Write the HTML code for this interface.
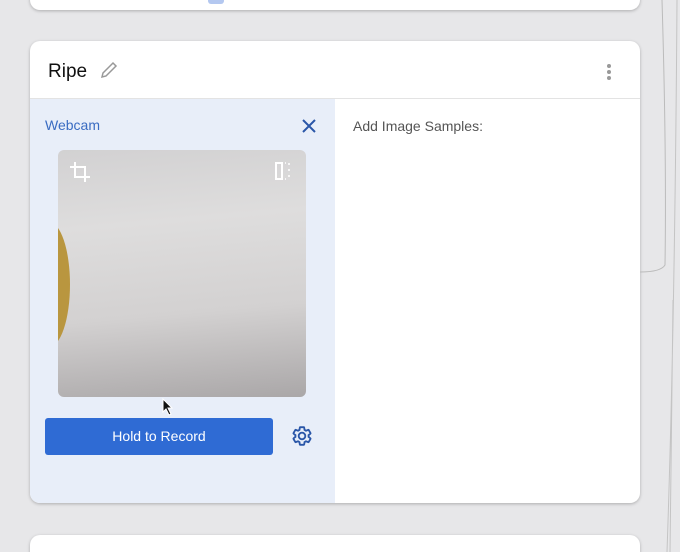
<!DOCTYPE html>
<html><head><style>
html,body{margin:0;width:680px;height:552px;overflow:hidden}
body{background:#e7e7e9;position:relative;font-family:"Liberation Sans",Arial,sans-serif}
.card{position:absolute;background:#fff;border-radius:10px;box-shadow:0 1px 3px rgba(0,0,0,.25)}
</style></head><body>
<div class="card" style="left:30px;top:-20px;width:610px;height:30px"></div>
<div style="position:absolute;left:208px;top:0;width:16px;height:4px;background:#b4c8f0;border-radius:0 0 3px 3px"></div>
<div class="card" style="left:30px;top:41px;width:610px;height:462px;overflow:hidden">
  <div style="position:absolute;left:18px;top:20px;font-size:19px;color:#111">Ripe</div>
  <svg style="position:absolute;left:69px;top:19px" width="20" height="20" viewBox="0 0 20 20"><path d="M3 17l1-4L14 3l3 3L7 16z" fill="none" stroke="#999" stroke-width="1.5"/></svg>
  <div style="position:absolute;left:577px;top:23px;width:4px">
    <div style="width:4px;height:4px;border-radius:2px;background:#999;margin-bottom:2px"></div>
    <div style="width:4px;height:4px;border-radius:2px;background:#999;margin-bottom:2px"></div>
    <div style="width:4px;height:4px;border-radius:2px;background:#999"></div>
  </div>
  <div style="position:absolute;left:0;top:57px;width:610px;height:1px;background:#e3e3e3"></div>
  <div style="position:absolute;left:0;top:58px;width:305px;height:404px;background:#e8eef9"></div>
  <div style="position:absolute;left:15px;top:76px;font-size:14px;color:#3a6cc2">Webcam</div>
  <svg style="position:absolute;left:271px;top:77px" width="16" height="16" viewBox="0 0 16 16"><path d="M2 2L14 14M14 2L2 14" stroke="#2a56a8" stroke-width="2"/></svg>
  <div style="position:absolute;left:323px;top:77px;font-size:14px;color:#555">Add Image Samples:</div>
  <div style="position:absolute;left:28px;top:109px;width:248px;height:247px;border-radius:6px;overflow:hidden;background:linear-gradient(175deg,#d2d1d2 0%,#dedddd 30%,#d3d1d1 65%,#aaa7a8 100%)">
    <div style="position:absolute;left:-30px;top:72px;width:42px;height:125px;border-radius:50%;background:#b9963f"></div>
    <svg style="position:absolute;left:10px;top:10px" width="24" height="24" viewBox="0 0 24 24"><path d="M7 2v15h15M2 7h15v15" fill="none" stroke="#fff" stroke-width="2"/></svg>
    <svg style="position:absolute;left:214px;top:10px" width="22" height="22" viewBox="0 0 22 22"><path d="M10 2v18M9 3H4v16h5" fill="none" stroke="#fff" stroke-width="2"/><path d="M13 3h1M17 3v2M17 9v2M17 15v2M13 19h1" stroke="#fff" stroke-width="1.5"/></svg>
  </div>
  <svg style="position:absolute;left:132px;top:357px" width="12" height="18" viewBox="0 0 12 18"><path d="M1 1v13l3-3 3 6 2-1-3-6h4z" fill="#111" stroke="#fff" stroke-width="1"/></svg>
  <div style="position:absolute;left:15px;top:377px;width:228px;height:37px;background:#2f6bd4;border-radius:3px;color:#fff;font-size:14px;text-align:center;line-height:37px">Hold to Record</div>
  <svg style="position:absolute;left:261px;top:384px" width="22" height="22" viewBox="0 0 24 24"><path d="M19.14 12.94c.04-.3.06-.61.06-.94 0-.32-.02-.64-.07-.94l2.03-1.58a.49.49 0 00.12-.61l-1.92-3.32a.49.49 0 00-.59-.22l-2.39.96c-.5-.38-1.03-.7-1.62-.94l-.36-2.54a.48.48 0 00-.48-.41h-3.84a.48.48 0 00-.47.41l-.36 2.54c-.59.24-1.130.57-1.62.94l-2.39-.96a.48.48 0 00-.59.22L2.74 8.87a.47.47 0 00.12.61l2.030 1.58c-.05.3-.09.63-.09.94s.02.64.07.94l-2.03 1.58a.49.49 0 00-.12.61l1.92 3.32c.12.22.37.29.59.22l2.39-.96c.5.38 1.03.7 1.62.94l.36 2.54c.05.24.24.41.48.41h3.84c.24 0 .44-.17.47-.41l.36-2.54c.59-.24 1.13-.56 1.62-.94l2.39.96c.22.08.47 0 .59-.22l1.92-3.32a.46.46 0 00-.12-.61l-2.01-1.58zM12 15.6A3.6 3.6 0 1112 8.4a3.6 3.6 0 010 7.2z" fill="none" stroke="#2a56a8" stroke-width="2"/></svg>
</div>
<div class="card" style="left:30px;top:535px;width:610px;height:40px"></div>
<svg style="position:absolute;left:640px;top:0" width="40" height="552"><path d="M22 0C25 100 26 200 25 265C22 270 12 272 0 272" fill="none" stroke="#bbb" stroke-width="1"/><path d="M37 0C36 150 34 350 27 552M33 300C32 400 31 480 30 552" fill="none" stroke="#c4c4c4" stroke-width="1"/></svg>
</body></html>
